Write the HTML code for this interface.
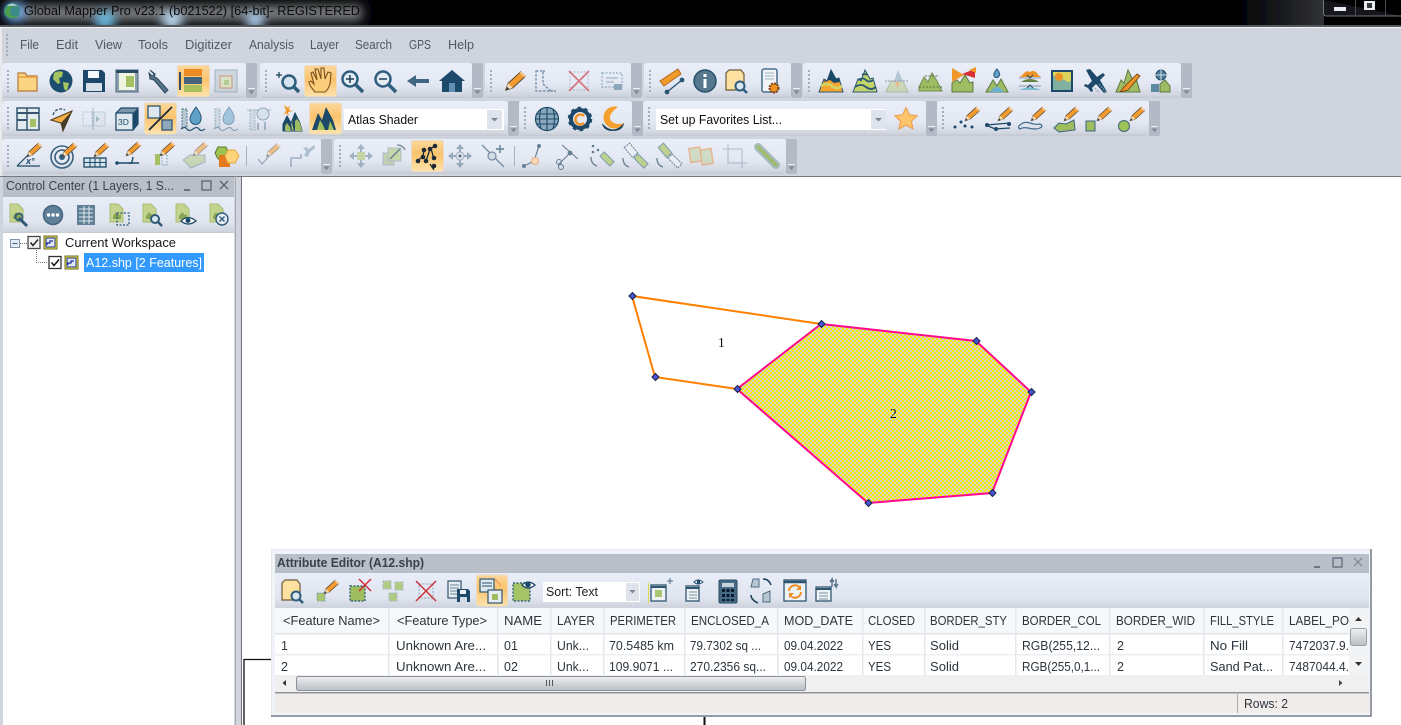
<!DOCTYPE html>
<html><head><meta charset="utf-8"><title>Global Mapper</title>
<style>html,body{margin:0;padding:0;background:#fff;overflow:hidden}svg{display:block}text{font-family:"Liberation Sans",sans-serif;font-size:12.500px}</style></head>
<body>
<svg width="1401" height="725" viewBox="0 0 1401 725" xmlns="http://www.w3.org/2000/svg">
<defs>
<linearGradient id="bd" x1="0" y1="0" x2="0" y2="1"><stop offset="0" stop-color="#e9eef8"/><stop offset=".6" stop-color="#e4e8f3"/><stop offset=".9" stop-color="#d3d7e1"/><stop offset="1" stop-color="#c3c8d1"/></linearGradient>
<linearGradient id="ac" x1="0" y1="0" x2="0" y2="1"><stop offset="0" stop-color="#fbd79c"/><stop offset=".45" stop-color="#fbc36c"/><stop offset="1" stop-color="#fde3ad"/></linearGradient>
<linearGradient id="tb" x1="0" y1="0" x2="0" y2="1"><stop offset="0" stop-color="#e8edf7"/><stop offset=".7" stop-color="#e0e5f0"/><stop offset="1" stop-color="#cdd2dc"/></linearGradient>
<linearGradient id="sc" x1="0" y1="0" x2="0" y2="1"><stop offset="0" stop-color="#eef0f2"/><stop offset="1" stop-color="#b9bec4"/></linearGradient>
<linearGradient id="gl" x1="0" y1="0" x2="1" y2="0"><stop offset="0" stop-color="#020305"/><stop offset="1" stop-color="#303236"/></linearGradient>
<pattern id="sand" width="4" height="4" patternUnits="userSpaceOnUse"><rect width="4" height="4" fill="#f5ea10"/><rect x="0" y="0" width="2" height="2" fill="#d4d4c0"/><rect x="2" y="2" width="2" height="2" fill="#d4d4c0"/></pattern>
<filter id="bl" x="-30%" y="-100%" width="160%" height="300%"><feGaussianBlur stdDeviation="5"/></filter>
<filter id="sf" filterUnits="userSpaceOnUse" x="0" y="0" width="1401" height="725"><feGaussianBlur stdDeviation="0.3"/></filter>
<g id="grip" fill="#a3adbc"><rect x="0" y="0" width="2" height="2"/><rect x="0" y="4" width="2" height="2"/><rect x="0" y="8" width="2" height="2"/><rect x="0" y="12" width="2" height="2"/><rect x="0" y="16" width="2" height="2"/><rect x="0" y="20" width="2" height="2"/></g>
<g id="end"><rect x="0" y="0" width="11" height="35" rx="2" fill="#b4bac5"/><rect x="2" y="25" width="7" height="1" fill="#eef1f4"/><path d="M2.500 27.500h6l-3 3.500z" fill="#7c8692"/></g>
<g id="pen"><path d="M-8 8l2-6L5-8l4 4L-2 6z" fill="#f29a2e" stroke="#5b4a34" stroke-width=".9"/><path d="M-8 8l2-6 4 4z" fill="#f4dcb2"/><path d="M-8 8l1-3 2 2z" fill="#333"/><path d="M4-7l4 4 1.500-1.500-4-4z" fill="#f3c693"/></g>
<g id="mnt"><path d="M-12 10V6l5-10 4 5 4-9 5 8 2 4 3 6z" fill="#a0bc62" stroke="#6f8b55"/></g>
<g id="mdoc"><path d="M-9-11h8l5 5V7H-9z" fill="#c4d48f" stroke="#a9bc75"/><path d="M-6 1l3-4 3 3 2-1v5H-6z" fill="#8aa654"/></g>
<g id="mv" fill="#8ba0b2" stroke="none"><path d="M0-12l4 5H-4zM0 12l4-5H-4zM-12 0l5-4V4zM12 0l-5-4V4z"/><path d="M-1-8h2V8h-2zM-8-1h16v2H-8z"/></g>
</defs>
<g filter="url(#sf)">
<rect x="0" y="0" width="1401" height="725" fill="#fff"/>
<!-- chrome -->
<rect x="0" y="0" width="1401" height="27" fill="#020305"/>
<rect x="1240" y="0" width="84" height="25" fill="url(#gl)"/>
<g filter="url(#bl)"><rect x="18" y="5" width="344" height="16" fill="#77797c"/><circle cx="15" cy="12" r="11" fill="#6fa4dc"/><circle cx="105" cy="21" r="10" fill="#68b6da"/><circle cx="172" cy="21" r="10" fill="#b5d2e8"/><circle cx="255" cy="21" r="9" fill="#a4c5e2"/></g>
<rect x="0" y="25" width="1401" height="3" fill="#d0d4dc"/>
<circle cx="12" cy="11" r="8" fill="#3c8a8a"/><path d="M5 12c1-7 9-10 14-5-5-2-10 0-9 6 1 3 5 4 9 2-3 4-13 4-14-3z" fill="#4da04c"/><path d="M7 6c3-3 8-3 10 0-4-1-7 0-10 0z" fill="#bfd7ef"/>
<text x="24" y="15" fill="#08090b" textLength="336" lengthAdjust="spacingAndGlyphs" style="font-size:13px">Global Mapper Pro v23.1 (b021522) [64-bit]- REGISTERED</text>
<path d="M1323.500 0v13q0 3 3 3h75" fill="#14161a" stroke="#707478"/>
<path d="M1355.500 0v16M1385.500 0v16" stroke="#4b4e53"/>
<rect x="1334" y="7" width="12" height="4" fill="#e9ecf0"/>
<rect x="1364" y="1" width="11" height="9" fill="#e9ecf0"/><rect x="1367" y="3" width="5" height="5" fill="#34373b"/>
<rect x="0" y="25" width="1401" height="2" fill="#55585c"/>
<rect x="0" y="27" width="1401" height="1" fill="#f2f4f6"/>
<rect x="0" y="28" width="1401" height="148" fill="#d0d4dc"/>
<rect x="0" y="28" width="2" height="148" fill="#e8eaee"/>

<!-- menu -->
<g transform="translate(6,34)"><use href="#grip"/></g>
<g fill="#4e5a66">
<text x="20" y="49" textLength="19" lengthAdjust="spacingAndGlyphs">File</text><text x="56" y="49" textLength="22" lengthAdjust="spacingAndGlyphs">Edit</text><text x="95" y="49" textLength="27" lengthAdjust="spacingAndGlyphs">View</text><text x="138" y="49" textLength="30" lengthAdjust="spacingAndGlyphs">Tools</text><text x="185" y="49" textLength="47" lengthAdjust="spacingAndGlyphs">Digitizer</text><text x="249" y="49" textLength="45" lengthAdjust="spacingAndGlyphs">Analysis</text><text x="310" y="49" textLength="29" lengthAdjust="spacingAndGlyphs">Layer</text><text x="355" y="49" textLength="37" lengthAdjust="spacingAndGlyphs">Search</text><text x="409" y="49" textLength="22" lengthAdjust="spacingAndGlyphs">GPS</text><text x="448" y="49" textLength="26" lengthAdjust="spacingAndGlyphs">Help</text>
</g>

<!-- bands -->
<g>
<rect x="2" y="63" width="244" height="35" rx="3" fill="url(#bd)"/><use href="#end" x="246" y="63"/>
<rect x="260" y="63" width="212" height="35" rx="3" fill="url(#bd)"/><use href="#end" x="472" y="63"/>
<rect x="485" y="63" width="146" height="35" rx="3" fill="url(#bd)"/><use href="#end" x="631" y="63"/>
<rect x="644" y="63" width="147" height="35" rx="3" fill="url(#bd)"/><use href="#end" x="791" y="63"/>
<rect x="803" y="63" width="378" height="35" rx="3" fill="url(#bd)"/><use href="#end" x="1181" y="63"/>
<rect x="2" y="101" width="506" height="35" rx="3" fill="url(#bd)"/><use href="#end" x="508" y="101"/>
<rect x="519" y="101" width="113" height="35" rx="3" fill="url(#bd)"/><use href="#end" x="632" y="101"/>
<rect x="643" y="101" width="283" height="35" rx="3" fill="url(#bd)"/><use href="#end" x="926" y="101"/>
<rect x="937" y="101" width="212" height="35" rx="3" fill="url(#bd)"/><use href="#end" x="1149" y="101"/>
<rect x="2" y="139" width="319" height="35" rx="3" fill="url(#bd)"/><use href="#end" x="321" y="139"/>
<rect x="334" y="139" width="452" height="35" rx="3" fill="url(#bd)"/><use href="#end" x="786" y="139"/>
<use href="#grip" x="7" y="70"/><use href="#grip" x="265" y="70"/><use href="#grip" x="490" y="70"/><use href="#grip" x="649" y="70"/><use href="#grip" x="808" y="70"/>
<use href="#grip" x="7" y="107"/><use href="#grip" x="524" y="107"/><use href="#grip" x="648" y="107"/><use href="#grip" x="942" y="107"/>
<use href="#grip" x="7" y="145"/><use href="#grip" x="339" y="145"/>
</g>
<!-- active highlights -->
<g fill="url(#ac)" stroke="#e9dcc2">
<rect x="177.500" y="65.500" width="32" height="31" rx="2"/><rect x="304.500" y="65.500" width="32" height="31" rx="2"/>
<rect x="144.500" y="103" width="32" height="31" rx="2"/><rect x="309.500" y="103" width="32" height="31" rx="2"/>
<rect x="411.500" y="140.500" width="32" height="31" rx="2"/>
</g>

<!-- Row 1 icons -->
<g transform="translate(28,81)"><path d="M-10-8h7l2 3h10v15h-19z" fill="#fcd582" stroke="#b5793a" stroke-width="1.200"/><path d="M-10-4h19" stroke="#e89e3c" stroke-width="1.500"/></g>
<g transform="translate(61,81)"><circle r="11.500" fill="#1c4e6e"/><path d="M-7-8q5-3 9-1l-1 5-3 1 1 5-2 1-5-5zM2 1l6 1-2 8-3-2z" fill="#a4c460"/></g>
<g transform="translate(94,81)"><path d="M-11-11h19l3 3v19h-22z" fill="#1f4a69"/><rect x="-6" y="-10" width="11" height="7" fill="#f3f6fa"/><rect x="-8" y="2" width="16" height="8" fill="#d8e0e8"/></g>
<g transform="translate(127,81)"><rect x="-11" y="-11" width="22" height="22" fill="#8aa0ae" stroke="#4d6a7e"/><rect x="-8" y="-8" width="16" height="17" fill="#eef3e2"/><rect x="-1" y="-5" width="8" height="11" fill="#a3c163"/><rect x="-11" y="-11" width="22" height="3" fill="#2c4e66"/></g>
<g transform="translate(160,81)"><path d="M-10-11l5 5-1 2 3 1 11 12-3 3L-6-1l-4-1-1-6 3 3 3-2z" fill="#55738a" stroke="#2f4a5f"/></g>
<g transform="translate(193,81)"><rect x="-9" y="-12" width="18" height="7" fill="#ee8a24"/><rect x="-9" y="-4" width="18" height="7" fill="#45647a"/><rect x="-9" y="4" width="18" height="7" fill="#a6c15c"/><path d="M-13-9v18" stroke="#2e4d66" stroke-width="2"/></g>
<g transform="translate(226,81)" opacity=".65"><rect x="-11" y="-11" width="22" height="22" fill="#bfcdd6" stroke="#7d96a6"/><rect x="-6" y="-5" width="12" height="12" fill="#d5dfb5" stroke="#c46c35"/><rect x="-2" y="-1" width="5" height="5" fill="#9dbd5f"/></g>
<g transform="translate(288,81)"><circle cx="1" cy="1" r="6.500" fill="#d4e3ed" stroke="#2d5d7e" stroke-width="2.500"/><path d="M6 6l5 5" stroke="#2d5d7e" stroke-width="3.500"/><path d="M-9-9v6M-12-6h6" stroke="#1d3f5a" stroke-width="1.200"/></g>
<g transform="translate(320,81)"><path d="M-5 11q-6-7-6-10l2-1 3 3-3-11 2-1 4 8-2-11 3 0 3 10V-13h3l1 11 3-7 3 1-1 11q-2 6-5 8z" fill="#fbcc7a" stroke="#7c4f1c" stroke-width="1.100"/></g>
<g transform="translate(352,81)"><circle cx="-2" cy="-2" r="7.500" fill="#e2ecf2" stroke="#2d5d7e" stroke-width="2.500"/><path d="M4 4l7 7" stroke="#2d5d7e" stroke-width="3.500"/><path d="M-6-2h8M-2-6v8" stroke="#1d3f5a" stroke-width="1.500"/></g>
<g transform="translate(385,81)"><circle cx="-2" cy="-2" r="7.500" fill="#e2ecf2" stroke="#2d5d7e" stroke-width="2.500"/><path d="M4 4l7 7" stroke="#2d5d7e" stroke-width="3.500"/><path d="M-6-2h8" stroke="#1d3f5a" stroke-width="1.500"/></g>
<g transform="translate(418,81)"><path d="M-11 0l9-6v4h13v4H-2v4z" fill="#3f6681"/></g>
<g transform="translate(452,81)"><path d="M-13 0L0-11 13 0h-3v11H-10V0z" fill="#1f4a69"/><rect x="-3" y="2" width="6" height="9" fill="#5f8fb4"/></g>
<use href="#pen" transform="translate(515,81) scale(1.150)"/>
<g transform="translate(546,81)"><path d="M-10-10h7v13l8 7h-15z" fill="none" stroke="#4f7194" stroke-width="1.500" stroke-dasharray="2.500 1.500" opacity=".7"/><path d="M-3-10h3M5 10h5" stroke="#4f7194" stroke-dasharray="2 1" stroke-width="1.500" opacity=".7"/></g>
<g transform="translate(579,81)" opacity=".65"><rect x="-9" y="-9" width="18" height="18" fill="none" stroke="#84a4b8" stroke-dasharray="2 1.500"/><path d="M-10-10L10 10M10-10L-10 10" stroke="#c9383c" stroke-width="1.600"/></g>
<g transform="translate(612,81)" opacity=".6"><rect x="-10" y="-8" width="20" height="14" fill="none" stroke="#6b94b3" stroke-dasharray="2 1.500" stroke-width="1.500"/><path d="M-6-3h12M-6 1h8" stroke="#88a4b8" stroke-width="1.500"/><rect x="2" y="3" width="8" height="6" fill="#547f9c"/></g>
<g transform="translate(671,81)"><path d="M-11 0L7-12l3 5-17 12z" fill="#f09a2b" stroke="#b56a1f"/><path d="M-4 11L11-1" stroke="#2c5777" stroke-width="1.400"/><circle cx="-4" cy="11" r="2.400" fill="#2c5777"/><circle cx="11" cy="-1" r="2.400" fill="#2c5777"/></g>
<g transform="translate(705,81)"><circle r="11" fill="#56788f" stroke="#27516c" stroke-width="1.500"/><rect x="-1.500" y="-2" width="3" height="9" fill="#fff"/><rect x="-1.500" y="-7" width="3" height="3" fill="#fff"/></g>
<g transform="translate(737,81)"><path d="M-8-11H4l3 4V9H-11V-8z" fill="#fde1a0" stroke="#6c5a3a" stroke-width="1.200"/><circle cx="3" cy="5" r="4.500" fill="#dce8f0" stroke="#2d5d7e" stroke-width="2"/><path d="M6 8l4 4" stroke="#2d5d7e" stroke-width="2.500"/></g>
<g transform="translate(771,81)"><rect x="-9" y="-12" width="15" height="23" rx="2" fill="#f2f5f8" stroke="#2c5777" stroke-width="1.300"/><path d="M-6-8h9M-6-5h9M-6-2h9" stroke="#9fb2c0"/><circle cx="3" cy="7" r="4.500" fill="#ee9225" stroke="#7c3f12" stroke-dasharray="2 1" stroke-width="2"/></g>
<g transform="translate(831,81)"><path d="M-12 11L-7-2l3 2 4-11 5 9 3-1 4 14z" fill="#f6a52f" stroke="#2a5674"/><path d="M-6-2l2 2 4-11 5 9 3-1 1 4-6 1-4-3-6 2z" fill="#1f4a69"/><path d="M-10 5q6-4 11 0t10 0" stroke="#cfd86a" stroke-width="2.500" fill="none"/></g>
<g transform="translate(865,81)"><path d="M-12 11L-7-2l3 2 4-11 5 9 3-1 4 14z" fill="#c3d56b" stroke="#2a5674"/><path d="M-10 6q6-4 11 0t10 0M-7-1q5-3 8 0t7 0M-3-6q2-2 5 0" stroke="#2a5674" stroke-width="1.800" fill="none"/></g>
<g transform="translate(897,81)" opacity=".6"><path d="M-11 11l5-11h12l5 11z" fill="#bdce92" stroke="#8ea373"/><path d="M-3 0l4-11 5 11z" fill="#93b0c4"/><path d="M-12 0h24" stroke="#567" stroke-dasharray="2 1"/><path d="M-2 1l2 6 3-6z" fill="#f0a050"/></g>
<g transform="translate(931,81)"><use href="#mnt"/><path d="M-12 6h24M-6-5h13" stroke="#557740" stroke-dasharray="2 1.500" fill="none"/></g>
<g transform="translate(964,81)"><path d="M-12 11V2l5-3 3 3 5-8 5 8 3-1v10z" fill="#a0bc62" stroke="#5c7a45"/><path d="M-12-13L0-6l-12 7z" fill="#f0992c"/><path d="M-2-7l5-2 8-3v9z" fill="#d62e38"/><path d="M5-11l7-3v6z" fill="#f0992c"/></g>
<g transform="translate(997,81)"><path d="M-11 11L-4-1 0 5 4-2 11 11z" fill="#a0bc62" stroke="#5c7a45"/><path d="M0-12q4 5 2 7a2.800 2.800 0 0 1-5 0q-1-3 3-7z" fill="#5fa2c8" stroke="#2a5674"/><path d="M-8 11l8-6 8 6z" fill="#6aaed0"/></g>
<g transform="translate(1030,81)"><path d="M-11-4q3-1 5-4 3-3 6-1 3-2 6 0 2 3 5 5z" fill="#ee9225"/><path d="M-11-3h22M-11 5h22" stroke="#8a9aa8"/><path d="M-9 1q4-3 9-3 5 0 9 3z" fill="#65803f"/><path d="M-11 9q11-5 22 0z" fill="#7cbcd0"/><path d="M-3-6L0-3l3-3M-3 7L0 4l3 3" stroke="#1f4a69" fill="none"/></g>
<g transform="translate(1062,81)"><rect x="-11" y="-11" width="22" height="22" fill="#1f4a69"/><rect x="-9" y="-9" width="18" height="18" fill="#7fb0a0"/><path d="M-9-9H9v9q-3 2-5 0t-6-2-3-2-4-1z" fill="#dcd35c"/><circle cx="-3" cy="-4" r="4" fill="#ee9225"/></g>
<g transform="translate(1095,81)"><path d="M-9-11l4-1 7 8 6-4 2 2-5 5 7 12-3 1-8-9-4 4 1 3-2 1-3-4-4-2 1-2 3 1 4-4z" fill="#1f4a69"/><path d="M4 3l7 8M0 7l4 5" stroke="#87a0b2" stroke-dasharray="2 1"/></g>
<g transform="translate(1128,81)"><path d="M-12 11L-7-1l3 3 4-13 5 10 3-2 4 14z" fill="#a0bc62" stroke="#5c7a45"/><path d="M-8 11l4-5L9-7l3 2-12 14z" fill="#ee9225" stroke="#6a3a14" stroke-width=".8"/></g>
<g transform="translate(1161,81)"><circle cy="-6" r="5" fill="#4c7a98" stroke="#1f4a69"/><path d="M-7-6H7M0-13V1" stroke="#cfdbe3"/><path d="M-10 11V3h8V11z" fill="#5d89a5"/><path d="M-1 11V3l5-4 5 6V11z" fill="#a0bc62" stroke="#5c7a45"/></g>

<!-- Row 2 icons -->
<g transform="translate(28,119)"><rect x="-11" y="-11" width="22" height="22" fill="#e2ebee" stroke="#35566e" stroke-width="1.500"/><path d="M-1-11V11" stroke="#35566e" stroke-width="1.500"/><path d="M-11-6H11M-11 1h10" stroke="#35566e" stroke-width="2"/><rect x="2" y="0" width="6" height="8" fill="#a3c163"/></g>
<g transform="translate(61,119)"><path d="M-10 1L11-8 2 12l-2-8z" fill="#f6b045" stroke="#4d3a20"/><path d="M0 4l11-12-9 20z" fill="#473d2c"/><path d="M-8-4q2-6 8-6 2 0 4 1" fill="none" stroke="#2e4d66" stroke-width="1.300" stroke-dasharray="3 1.500"/></g>
<g transform="translate(94,119)" opacity=".55"><rect x="-11" y="-7" width="9" height="14" fill="none" stroke="#88a4b8" stroke-dasharray="2 1.500"/><rect x="0" y="-7" width="11" height="14" fill="#d9e2e8" stroke="#a0b5c2"/><path d="M-1-11V11" stroke="#6f8fa4"/><path d="M2-3l4 3-4 3z" fill="#6f8fa4"/></g>
<g transform="translate(127,119)"><path d="M-11-6l5-5H11V5L6 11H-11z" fill="#7d98aa" stroke="#1f4a69" stroke-width="1.200"/><rect x="-11" y="-6" width="17" height="17" fill="#dfe8ee" stroke="#1f4a69" stroke-width="1.200"/><path d="M6-6V11l5-6V-11z" fill="#1f4a69"/><text x="-9" y="6" fill="#1f4a69" style="font-size:8.500px">3D</text></g>
<g transform="translate(160,119)"><rect x="-12" y="-13" width="12" height="12" fill="#dfe7ee" stroke="#2f5570" stroke-width="1.300"/><rect x="2" y="1" width="10" height="10" fill="#8fa8ba" stroke="#2f5570" stroke-width="1.300"/><path d="M-11 11L12-12" stroke="#1e2b35" stroke-width="1.800"/></g>
<g transform="translate(193,119)"><path d="M-11-10H-6V8H-11z" fill="#b8c8d0" stroke="#567a90" stroke-dasharray="2 1"/><path d="M3-12q6 8 5 12a5.500 5.500 0 0 1-11 0q0-4 6-12z" fill="#5fa2c8" stroke="#2a5674"/><path d="M-12 10q4-3 6 0t6 0 6 0 6 0" stroke="#2a5674" fill="none" stroke-width="1.300"/></g>
<g transform="translate(226,119)" opacity=".5"><path d="M-11-10H-6V8H-11z" fill="#b8c8d0" stroke="#567a90" stroke-dasharray="2 1"/><path d="M3-12q6 8 5 12a5.500 5.500 0 0 1-11 0q0-4 6-12z" fill="#5fa2c8" stroke="#2a5674"/><path d="M-12 10q4-3 6 0t6 0 6 0 6 0" stroke="#2a5674" fill="none"/></g>
<g transform="translate(259,119)" opacity=".45"><path d="M-9-9H-4V11H-9z" fill="#b8c8d0" stroke="#567a90" stroke-dasharray="2 1"/><path d="M-12-9h24" stroke="#567a90"/><circle cx="4" cy="-5" r="6" fill="#c3d7e2" stroke="#2a5674"/><path d="M-1 4V11M6 3V11" stroke="#567a90" stroke-width="2"/></g>
<g transform="translate(292,119)"><path d="M-9 12V5l4-8 4 7 4-10 5 10 2 8z" fill="#a0bc62" stroke="#1f4a69"/><path d="M-5-3l4 7 1 8H-9V5zM3-6l5 10 2 8H2l-2-8z" fill="#1f4a69"/><path d="M3 12V2l2-2 3 4 2 8zM-7 12v-5l2-3 3 4 1 4z" fill="#a0bc62"/><path d="M-6-8L-8-14l4 3 2-3-1 5 4 1-5 1 1 4-3-3-3 2z" fill="#f09a2c"/></g>
<g transform="translate(325,119)"><path d="M-13 11L-7-6l4 7 4-13 7 13 3 10z" fill="#1f4a69"/><path d="M-8 11l3-10 3 5 2 5zM3 11l2-9 4 9z" fill="#a6c15c"/></g>
<rect x="344" y="109" width="160" height="21" fill="#fff"/><rect x="487" y="110" width="15" height="19" fill="#dfe4ec"/><path d="M491 118h7l-3.500 3.500z" fill="#7a8592"/>
<text x="348" y="124" fill="#111" textLength="70" lengthAdjust="spacingAndGlyphs">Atlas Shader</text>
<g transform="translate(547,119)"><circle r="11.500" fill="#8aa8bb" stroke="#1f4a69" stroke-width="1.200"/><path d="M-11-5H11M-12 0H12M-11 5H11M0-12V12M-6-10q-3 10 0 20M6-10q3 10 0 20" stroke="#1f4a69" fill="none" stroke-width="1.100"/></g>
<g transform="translate(580,119)"><circle r="9" fill="none" stroke="#1f4a69" stroke-width="4"/><circle r="11" fill="none" stroke="#1f4a69" stroke-width="2.500" stroke-dasharray="3.500 3.500"/><path d="M4-3a5 5 0 1 0 0 7" stroke="#ee9225" stroke-width="2.500" fill="none"/></g>
<g transform="translate(613,119)"><path d="M5-12A11 11 0 1 0 11 4Q4 7-2 2-6-4 5-12z" fill="#f5a02e"/><path d="M-11 4q11 13 22 0q-1 8-11 8T-11 4z" fill="#1f3f58"/></g>
<rect x="656" y="109" width="230" height="21" fill="#fff"/><rect x="871" y="110" width="15" height="19" fill="#dfe4ec"/><path d="M875 118h7l-3.500 3.500z" fill="#7a8592"/>
<text x="660" y="124" fill="#111" textLength="122" lengthAdjust="spacingAndGlyphs">Set up Favorites List...</text>
<path d="M906 107.500l3.400 7.200 7.800 1-5.700 5.400 1.500 7.800-7-3.800-7 3.800 1.500-7.800-5.700-5.400 7.800-1z" fill="#fdc56b" stroke="#f09a48"/>
<use href="#pen" transform="translate(972,114) scale(.85)"/><g fill="#1f4a69"><circle cx="955" cy="127" r="1.500"/><circle cx="961" cy="122" r="1.500"/><circle cx="965" cy="126" r="1.500"/><circle cx="972" cy="127" r="1.500"/></g>
<use href="#pen" transform="translate(1005,114) scale(.85)"/><path d="M986 125l24-2M986 125l9 4 15-1" stroke="#1f4a69" stroke-width="1.300" fill="none"/><circle cx="987" cy="125" r="2" fill="#1f4a69"/><circle cx="1009" cy="124" r="2" fill="#1f4a69"/><circle cx="996" cy="129" r="2" fill="#1f4a69"/>
<use href="#pen" transform="translate(1038,114) scale(.85)"/><path d="M1020 125q4-4 10-2t10 1q4 2 0 4t-12 0q-5-1-8 1-3-2 0-4z" fill="none" stroke="#3b6a8a" stroke-width="1.200"/>
<use href="#pen" transform="translate(1071,114) scale(.85)"/><path d="M1054 128l5-5 7 1 8-4 1 10-16 2z" fill="#9dbd5f" stroke="#3d6384"/>
<use href="#pen" transform="translate(1104,114) scale(.85)"/><rect x="1086" y="121" width="9" height="10" fill="#9dbd5f" stroke="#3d6384"/>
<use href="#pen" transform="translate(1137,114) scale(.85)"/><circle cx="1124" cy="126" r="5.500" fill="#9dc254" stroke="#3d6384"/>

<!-- Row 3 icons -->
<g transform="translate(29,156)"><path d="M-12 10H11M-12 10L4-6" stroke="#1f4a69" stroke-width="1.200" fill="none"/><text x="-3" y="8" fill="#1f4a69" style="font-size:9px;font-weight:bold;font-style:italic">x°</text><use href="#pen" transform="translate(5,-6) scale(.85)"/></g>
<g transform="translate(62,156)"><circle cy="1" r="11" fill="none" stroke="#34607e" stroke-width="1.600"/><circle cy="1" r="7" fill="none" stroke="#34607e" stroke-width="1.600"/><circle cy="1" r="3" fill="#34607e"/><use href="#pen" transform="translate(7,-6) scale(.85)"/></g>
<g transform="translate(95,156)"><rect x="-11" y="2" width="22" height="9" fill="#d8e4ec" stroke="#1f4a69" stroke-width="1.300"/><path d="M-11 6.500H11M-5 2V11M0 2V11M5 2V11" stroke="#1f4a69"/><use href="#pen" transform="translate(6,-6) scale(.85)"/></g>
<g transform="translate(128,156)"><path d="M-12 7H11M1 7q3 2 4-6" stroke="#1f4a69" stroke-width="1.400" fill="none"/><circle cx="-11" cy="7" r="1.800" fill="#1f4a69"/><use href="#pen" transform="translate(5,-7) scale(.85)"/></g>
<g transform="translate(161,156)"><rect x="-6" y="-2" width="5" height="11" fill="#a3c163"/><rect x="1" y="-2" width="5" height="11" fill="none" stroke="#6d9dae" stroke-dasharray="1.500 1.500"/><use href="#pen" transform="translate(6,-7) scale(.85)"/></g>
<g transform="translate(194,156)" opacity=".55"><path d="M-11 4l7-5 15 0 0 7-14 6z" fill="#b4c98a" stroke="#6c8ea1"/><use href="#pen" transform="translate(6,-7) scale(.85)"/></g>
<g transform="translate(227,156)"><path d="M-12-3l3-6h8l3 6-3 6h-8z" fill="#9dc24f" stroke="#5a7a35"/><rect x="-8" y="-1" width="11" height="12" fill="#e37a20"/><path d="M-3-3l3-6h7l4 6-4 7H0z" fill="#fcd47a" stroke="#e8a63a" transform="translate(1,3)"/></g>
<rect x="246" y="146" width="1" height="20" fill="#a8b1bd"/>
<g transform="translate(267,156)" opacity=".55"><path d="M-9 3l4 5L3-1" stroke="#52748c" stroke-width="1.200" fill="none"/><use href="#pen" transform="translate(6,-6) scale(.8)"/></g>
<g transform="translate(302,156)" opacity=".5"><path d="M-11 11V2h10v-4" stroke="#52748c" fill="none" stroke-width="1.500"/><path d="M2 0l2-5-3-3 3-1 3 2 5-4 1 3-5 4-2 5z" fill="#7897ab"/></g>
<g transform="translate(361,156)" opacity=".75"><use href="#mv"/><rect x="-4" y="-4" width="8" height="8" fill="#b9cf8a"/></g>
<g transform="translate(394,156)" opacity=".7"><rect x="-11" y="-3" width="11" height="12" fill="#b5c89a" stroke="#9ab"/><rect x="-6" y="-8" width="13" height="13" fill="#b9cf8a" stroke="#9ab"/><path d="M-4 3L6-7" stroke="#356" stroke-width="1.400"/><path d="M3-11q6 0 8 5" fill="none" stroke="#567" stroke-width="1.400"/></g>
<g transform="translate(427,156)"><path d="M-9 4l5-3 1-8M-1 5l4-12 5-3M3 8l4 6M4-8L7 4" stroke="#1e2b35" stroke-width="1.300" fill="none"/><g fill="#1e2b35"><circle cx="-9" cy="5" r="2.300"/><circle cx="-4" cy="1" r="2.300"/><circle cx="-3" cy="-6" r="2.300"/><circle cx="-1" cy="5" r="2.300"/><circle cx="3" cy="-7" r="2.300"/><circle cx="8" cy="-10" r="2.300"/><circle cx="7" cy="2" r="2.300"/><circle cx="7" cy="10" r="2.300"/></g></g>
<g transform="translate(460,156)" opacity=".85"><use href="#mv"/><circle r="4" fill="#dfe7ee" stroke="#8ba0b2"/><circle r="1.500" fill="#456"/></g>
<g transform="translate(493,156)" opacity=".8"><path d="M-11-11L11 11" stroke="#57768c" stroke-width="1.300"/><circle cx="-1" cy="0" r="4" fill="#cfdbe3" stroke="#57768c" stroke-width="1.200"/><path d="M3-7h8M7-11v8" stroke="#57768c" stroke-width="1.700"/></g>
<rect x="514" y="146" width="1" height="20" fill="#a8b1bd"/>
<g transform="translate(534,156)" opacity=".85"><path d="M-10 10L0 5 5-10" stroke="#4f7188" stroke-width="1.200" fill="none"/><circle cx="-10" cy="10" r="2" fill="#4f7188"/><circle cx="5" cy="-10" r="2" fill="#4f7188"/><circle cx="1" cy="5" r="3.500" fill="#fbd9b0" stroke="#eba366"/></g>
<g transform="translate(567,156)" opacity=".85"><path d="M-5-11L11 3M-9 9L3-3" stroke="#4f6d82" stroke-width="1.100"/><circle cx="-8" cy="6" r="2.500" fill="none" stroke="#4f6d82"/><circle cx="-6" cy="11" r="2.500" fill="none" stroke="#4f6d82"/><circle cx="3" cy="-3" r="2.400" fill="#4f6d82"/></g>
<g transform="translate(601,156)" opacity=".85"><rect x="3" y="-4" width="6" height="14" fill="#b6cc7f" stroke="#6f90a4" transform="rotate(-45 6 3)"/><g fill="#4f6d82"><circle cx="-8" cy="-10" r="1.300"/><circle cx="-3" cy="-6" r="1.300"/><circle cx="-8" cy="-4" r="1.300"/></g><path d="M-10 1q0 7 6 9" fill="none" stroke="#4f6d82" stroke-width="1.300"/></g>
<g transform="translate(634,156)" opacity=".85"><rect x="-6" y="-12" width="7" height="13" fill="#e8eef2" stroke="#4f6d82" stroke-dasharray="2 1" transform="rotate(-40 -3 -5)"/><rect x="4" y="-2" width="6" height="14" fill="#b6cc7f" stroke="#6f90a4" transform="rotate(-45 7 5)"/><path d="M-11 2q0 7 6 9" fill="none" stroke="#4f6d82" stroke-width="1.300"/></g>
<g transform="translate(668,156)" opacity=".85"><rect x="-6" y="-12" width="7" height="13" fill="#b6cc7f" stroke="#6f90a4" transform="rotate(-40 -3 -5)"/><rect x="4" y="-2" width="6" height="14" fill="#e8eef2" stroke="#4f6d82" stroke-dasharray="2 1" transform="rotate(-45 7 5)"/><path d="M-11 2q0 7 6 9" fill="none" stroke="#4f6d82" stroke-width="1.300"/></g>
<g transform="translate(701,156)" opacity=".6"><rect x="-11" y="-9" width="11" height="14" fill="#c2d3a8" stroke="#e5995a" stroke-width="1.600" transform="rotate(-8)"/><rect x="0" y="-6" width="11" height="15" fill="#c2d3a8" stroke="#e5995a" stroke-width="1.600" transform="rotate(-8)"/></g>
<g transform="translate(735,156)" opacity=".35"><path d="M-7-12V7H12M-12-7H7V12" fill="none" stroke="#5f7f96" stroke-width="1.300"/></g>
<g transform="translate(767,156)" opacity=".85"><path d="M-9-9L9 9" stroke="#9bb3b5" stroke-width="8" stroke-linecap="round"/><path d="M-9-9L9 9" stroke="#95b454" stroke-width="3.500" stroke-linecap="round"/></g>

<!-- Control Center -->
<rect x="0" y="176" width="1401" height="1" fill="#75787e"/>
<rect x="0" y="177" width="242" height="548" fill="#d0d4dc"/>
<rect x="3" y="177" width="231" height="20" fill="#b8bfc9"/>
<text x="6" y="190" fill="#3a434d" textLength="168" lengthAdjust="spacingAndGlyphs">Control Center (1 Layers, 1 S...</text>
<path d="M184 190h6" stroke="#4f5a64" stroke-width="1.500"/><rect x="202" y="181" width="9" height="9" fill="none" stroke="#5a6570" stroke-width="1.300"/><path d="M220 181l8 8M228 181l-8 8" stroke="#5a6570" stroke-width="1.300"/>
<rect x="3" y="197" width="231" height="35" fill="url(#tb)"/>
<g transform="translate(19,215)"><use href="#mdoc"/><path d="M0 3l8 8" stroke="#2f5a78" stroke-width="3"/><circle cx="0" cy="2" r="3.500" fill="none" stroke="#2f5a78" stroke-width="1.800"/></g>
<g transform="translate(53,215)"><circle r="9.500" fill="#5f8098" stroke="#45657c" stroke-width="1.500"/><circle cx="-4.500" r="1.700" fill="#fff"/><circle r="1.700" fill="#fff"/><circle cx="4.500" r="1.700" fill="#fff"/></g>
<g transform="translate(86,215)"><rect x="-9" y="-10" width="18" height="20" fill="#5f7f95"/><path d="M-7-6H7M-7-2H7M-7 2H7M-7 6H7M-2-9V9M3-9V9" stroke="#dfe7ec"/></g>
<g transform="translate(119,215)"><use href="#mdoc"/><rect x="-2" y="-2" width="12" height="12" fill="none" stroke="#2f5a78" stroke-dasharray="2 1.500" stroke-width="1.300"/></g>
<g transform="translate(152,215)"><use href="#mdoc"/><circle cx="3" cy="4" r="4" fill="#dce8f0" stroke="#2f5a78" stroke-width="2"/><path d="M6 7l4 4" stroke="#2f5a78" stroke-width="2.500"/></g>
<g transform="translate(185,215)"><use href="#mdoc"/><path d="M-4 6q7-7 15 0-8 6-15 0z" fill="#fff" stroke="#1f4a69" stroke-width="1.300"/><circle cx="3" cy="5.500" r="2.500" fill="#1f4a69"/></g>
<g transform="translate(219,215)"><use href="#mdoc"/><circle cx="3" cy="4" r="6" fill="#e4ecf2" stroke="#2f5a78" stroke-width="1.400"/><path d="M0.500 1.500l5 5M5.500 1.500l-5 5" stroke="#2f5a78" stroke-width="1.300"/></g>
<rect x="3" y="232" width="231" height="493" fill="#fff"/>
<rect x="3" y="232" width="231" height="1" fill="#c8ccd2"/>
<rect x="235" y="176" width="1" height="549" fill="#a5a8ae"/><rect x="241" y="176" width="1" height="549" fill="#6f7278"/>
<!-- Tree -->
<rect x="10.500" y="239.500" width="9" height="8" fill="#e6eaf2" stroke="#7f93ad"/><path d="M12.500 243.500h5" stroke="#3e5f8a"/>
<path d="M20 243.500h7M36.500 250v12.500H48" stroke="#777" stroke-dasharray="1 1" fill="none"/>
<rect x="28" y="236.500" width="12" height="12" fill="#f3f3f3" stroke="#4a4a4a" stroke-width="1.300"/><path d="M30.500 242.500l2.500 3 5-6" fill="none" stroke="#222" stroke-width="1.500"/>
<rect x="44" y="236" width="13" height="13" fill="#ece43a" stroke="#6b6a2c"/><rect x="46" y="238" width="9" height="9" fill="#dfe8f4" stroke="#1a2f9a"/><path d="M47 245v-2h3v-2h3" stroke="#1a2f9a" fill="none" stroke-width="1.200"/>
<text x="65" y="247" fill="#16181c" textLength="111" lengthAdjust="spacingAndGlyphs">Current Workspace</text>
<rect x="49" y="256.500" width="12" height="12" fill="#fff" stroke="#333" stroke-width="1.300"/><path d="M51.500 262.500l2.500 3 5-6" fill="none" stroke="#111" stroke-width="1.500"/>
<rect x="65" y="256" width="13" height="13" fill="#ece43a" stroke="#6b6a2c"/><rect x="67" y="258" width="9" height="9" fill="#dfe8f4" stroke="#1a2f9a"/><path d="M68 265v-2h3v-2h3" stroke="#1a2f9a" fill="none" stroke-width="1.200"/>
<rect x="84" y="253" width="120" height="19" fill="#3399ff"/>
<text x="86" y="267" fill="#fff" textLength="116" lengthAdjust="spacingAndGlyphs">A12.shp [2 Features]</text>

<path d="M244 725V659.500H272" fill="none" stroke="#111" stroke-width="1.300"/>
<path d="M704.500 716V725" stroke="#111" stroke-width="2"/>

<!-- Attribute Editor -->
<rect x="271" y="549" width="1101" height="168" fill="#f0f3f7"/>
<rect x="271.500" y="549.500" width="1100" height="166" fill="none" stroke="#e4e8ee"/>
<path d="M271 716H1371V549" stroke="#7a8088" stroke-width="1.500" fill="none"/>
<rect x="275" y="554" width="1094" height="19" fill="#b8bfc9"/>
<text x="277" y="567" fill="#39424c" textLength="147" lengthAdjust="spacingAndGlyphs" style="font-weight:bold">Attribute Editor (A12.shp)</text>
<path d="M1314 567h6" stroke="#55606a" stroke-width="1.500"/><rect x="1333" y="558" width="9" height="9" fill="none" stroke="#5a6570" stroke-width="1.200"/><path d="M1354 558l8 8M1362 558l-8 8" stroke="#7a858f" stroke-width="1.200"/>
<rect x="275" y="573" width="1094" height="35" fill="url(#tb)"/>
<rect x="476.500" y="575" width="31" height="31" rx="2" fill="url(#ac)" stroke="#e9dcc2"/>
<g transform="translate(293,591)"><path d="M-8-11H4l3 4V9H-11V-8z" fill="#fde1a0" stroke="#6c5a3a" stroke-width="1.200"/><circle cx="3" cy="5" r="4.500" fill="#dce8f0" stroke="#2d5d7e" stroke-width="2"/><path d="M6 8l4 4" stroke="#2d5d7e" stroke-width="2.500"/></g>
<g transform="translate(326,591)"><rect x="-9" y="2" width="8" height="8" fill="#a9c66f" stroke="#7ba0b4" stroke-dasharray="1.500 1"/><use href="#pen" transform="translate(5,-4) scale(.85)"/></g>
<g transform="translate(360,591)"><rect x="-10" y="-5" width="15" height="15" fill="#9dbd5f" stroke="#3d6384" stroke-dasharray="2 1.500" stroke-width="1.400"/><path d="M-1-12L11 0M11-12L-1 0" stroke="#d32f35" stroke-width="1.500"/></g>
<g transform="translate(393,591)" opacity=".85"><rect x="-10" y="-10" width="8" height="8" fill="#a9c66f" stroke="#9fb3c0" stroke-dasharray="1.500 1" stroke-width="1.200"/><rect x="2" y="-9" width="8" height="8" fill="#a9c66f" stroke="#9fb3c0" stroke-dasharray="1.500 1" stroke-width="1.200"/><rect x="-4" y="2" width="8" height="8" fill="#a9c66f" stroke="#9fb3c0" stroke-dasharray="1.500 1" stroke-width="1.200"/></g>
<g transform="translate(426,591)"><rect x="-7" y="-7" width="14" height="14" fill="none" stroke="#8ba4b5" stroke-dasharray="2 1.500"/><path d="M-10-10L10 10M10-10L-10 10" stroke="#cf3238" stroke-width="1.500"/></g>
<g transform="translate(459,591)"><rect x="-11" y="-10" width="13" height="17" fill="#e6edf2" stroke="#2f5570" stroke-width="1.200"/><path d="M-9-6H0M-9-3H0M-9 0H0M-9 3H0" stroke="#6a8397"/><path d="M-2-2H9l2 2V11H-2z" fill="#1f4a69"/><rect x="1" y="-1" width="6" height="4" fill="#eef2f5"/><rect x="1" y="6" width="7" height="5" fill="#d3dde4"/></g>
<g transform="translate(491,591)"><rect x="-11" y="-12" width="14" height="13" fill="#dfe8ee" stroke="#2f5570" stroke-width="1.200"/><path d="M-9-8h10M-9-5h10" stroke="#2f5570"/><rect x="-3" y="-1" width="14" height="13" fill="#e6edf2" stroke="#2f5570" stroke-width="1.200"/><rect x="1" y="3" width="6" height="6" fill="#9dbd5f"/><path d="M4-12l6 7" stroke="#f0a25a" stroke-width="1.500"/></g>
<g transform="translate(524,591)"><rect x="-11" y="-8" width="17" height="18" fill="#a4c466" stroke="#3d6384" stroke-dasharray="2 1.500" stroke-width="1.400"/><path d="M-2-6q6-6 13 0-7 6-13 0z" fill="#fff" stroke="#1f4a69" stroke-width="1.300"/><circle cx="4" cy="-6.500" r="2.800" fill="#1f4a69"/></g>
<rect x="543" y="582" width="97" height="20" fill="#fff"/><rect x="626" y="583" width="13" height="18" fill="#dfe4ec"/><path d="M629.500 590h6l-3 3.500z" fill="#7a8592"/>
<text x="546" y="596" fill="#222" textLength="52" lengthAdjust="spacingAndGlyphs">Sort: Text</text>
<rect x="648" y="583" width="1" height="20" fill="#dcd84a"/>
<g transform="translate(660,591)"><rect x="-9" y="-6" width="15" height="16" fill="#eef2f5" stroke="#2f5570" stroke-width="1.300"/><path d="M-9-4H6" stroke="#2f5570" stroke-width="2"/><rect x="-5" y="-1" width="7" height="7" fill="#a9c66f"/><path d="M7-10h6M10-13v6" stroke="#4f6d82"/></g>
<g transform="translate(694,591)"><rect x="-8" y="-5" width="13" height="15" fill="#eef2f5" stroke="#2f5570" stroke-width="1.300"/><path d="M-8-3H5" stroke="#2f5570" stroke-width="2"/><path d="M-5 1H3M-5 4H3M-5 7H3" stroke="#7a92a3"/><path d="M0-9q4-4 9 0-5 4-9 0z" fill="#fff" stroke="#1f4a69"/><circle cx="4.500" cy="-9" r="1.700" fill="#1f4a69"/></g>
<g transform="translate(728,591)"><rect x="-9" y="-11" width="18" height="23" rx="1.500" fill="#456b85" stroke="#2c4e66"/><rect x="-6" y="-8" width="12" height="4" fill="#c7d4dc"/><g fill="#101e2a"><rect x="-6" y="-2" width="3" height="3"/><rect x="-1.500" y="-2" width="3" height="3"/><rect x="3" y="-2" width="3" height="3"/><rect x="-6" y="3" width="3" height="3"/><rect x="-1.500" y="3" width="3" height="3"/><rect x="3" y="3" width="3" height="3"/><rect x="-6" y="8" width="3" height="2"/><rect x="-1.500" y="8" width="3" height="2"/><rect x="3" y="8" width="3" height="2"/></g></g>
<g transform="translate(761,591)"><path d="M-10-4l2-8h6v8z" fill="#b7c7d2" stroke="#4f6d82"/><path d="M2 11l0-8 7-3v11z" fill="#b7c7d2" stroke="#4f6d82"/><path d="M2-12q6 0 8 6M-10 4q0 5 7 8" fill="none" stroke="#1f3f58" stroke-width="1.500"/></g>
<g transform="translate(795,591)"><rect x="-11" y="-11" width="22" height="21" fill="#eef2f5" stroke="#2f5570" stroke-width="1.300"/><path d="M-11-9H11" stroke="#2f5570" stroke-width="2.500"/><path d="M-6 0a6 6 0 0 1 11-3M6 1a6 6 0 0 1-11 3" fill="none" stroke="#ee8e26" stroke-width="2"/><path d="M6-6v5h-5zM-6 7v-5h5z" fill="#ee8e26"/></g>
<g transform="translate(826,591)"><rect x="-10" y="-4" width="15" height="14" fill="#eef2f5" stroke="#2f5570" stroke-width="1.300"/><path d="M-10-2H5" stroke="#2f5570" stroke-width="2"/><path d="M-7 2H2M-7 5H2M-7 8H2" stroke="#7a92a3"/><path d="M6-4v-8l-2 3M6-12l2 3M10-12v8l-2-3M10-4l2-3" stroke="#4f6d82" fill="none" stroke-width="1.300"/></g>

<!-- Table -->
<rect x="275" y="608" width="1094" height="67" fill="#fff"/>
<rect x="275" y="608" width="1074" height="25" fill="#f7f8fa"/>
<rect x="275" y="633" width="1074" height="1.500" fill="#dfe3e8"/>
<rect x="275" y="654" width="1074" height="1.500" fill="#eceff2"/>
<g fill="#e4e7eb"><rect x="388" y="608" width="1.500" height="67"/><rect x="497" y="608" width="1.500" height="67"/><rect x="550" y="608" width="1.500" height="67"/><rect x="603" y="608" width="1.500" height="67"/><rect x="684" y="608" width="1.500" height="67"/><rect x="777" y="608" width="1.500" height="67"/><rect x="862" y="608" width="1.500" height="67"/><rect x="924" y="608" width="1.500" height="67"/><rect x="1015" y="608" width="1.500" height="67"/><rect x="1109" y="608" width="1.500" height="67"/><rect x="1203" y="608" width="1.500" height="67"/><rect x="1282" y="608" width="1.500" height="67"/></g>
<g fill="#2c343c">
<text lengthAdjust="spacingAndGlyphs" x="283" y="625" textLength="97">&lt;Feature Name&gt;</text><text lengthAdjust="spacingAndGlyphs" x="397" y="625" textLength="90">&lt;Feature Type&gt;</text><text lengthAdjust="spacingAndGlyphs" x="504" y="625" textLength="38">NAME</text><text lengthAdjust="spacingAndGlyphs" x="557" y="625" textLength="38">LAYER</text><text lengthAdjust="spacingAndGlyphs" x="610" y="625" textLength="66">PERIMETER</text><text lengthAdjust="spacingAndGlyphs" x="691" y="625" textLength="78">ENCLOSED_A</text><text lengthAdjust="spacingAndGlyphs" x="784" y="625" textLength="69">MOD_DATE</text><text lengthAdjust="spacingAndGlyphs" x="868" y="625" textLength="47">CLOSED</text><text lengthAdjust="spacingAndGlyphs" x="930" y="625" textLength="77">BORDER_STY</text><text lengthAdjust="spacingAndGlyphs" x="1022" y="625" textLength="79">BORDER_COL</text><text lengthAdjust="spacingAndGlyphs" x="1116" y="625" textLength="79">BORDER_WID</text><text lengthAdjust="spacingAndGlyphs" x="1210" y="625" textLength="64">FILL_STYLE</text><text lengthAdjust="spacingAndGlyphs" x="1289" y="625" textLength="60">LABEL_PO</text>
<text x="281" y="650">1</text><text lengthAdjust="spacingAndGlyphs" x="396" y="650" textLength="90">Unknown Are...</text><text x="504" y="650">01</text><text x="557" y="650" textLength="32" lengthAdjust="spacingAndGlyphs">Unk...</text><text lengthAdjust="spacingAndGlyphs" x="609" y="650" textLength="65">70.5485 km</text><text lengthAdjust="spacingAndGlyphs" x="690" y="650" textLength="71">79.7302 sq ...</text><text lengthAdjust="spacingAndGlyphs" x="784" y="650" textLength="59">09.04.2022</text><text x="868" y="650" textLength="23" lengthAdjust="spacingAndGlyphs">YES</text><text x="930" y="650" textLength="29" lengthAdjust="spacingAndGlyphs">Solid</text><text lengthAdjust="spacingAndGlyphs" x="1022" y="650" textLength="78">RGB(255,12...</text><text x="1117" y="650">2</text><text x="1210" y="650" textLength="38" lengthAdjust="spacingAndGlyphs">No Fill</text><text lengthAdjust="spacingAndGlyphs" x="1289" y="650" textLength="60">7472037.9.</text>
<text x="281" y="671">2</text><text lengthAdjust="spacingAndGlyphs" x="396" y="671" textLength="90">Unknown Are...</text><text x="504" y="671">02</text><text x="557" y="671" textLength="32" lengthAdjust="spacingAndGlyphs">Unk...</text><text lengthAdjust="spacingAndGlyphs" x="609" y="671" textLength="64">109.9071 ...</text><text lengthAdjust="spacingAndGlyphs" x="690" y="671" textLength="76">270.2356 sq...</text><text lengthAdjust="spacingAndGlyphs" x="784" y="671" textLength="59">09.04.2022</text><text x="868" y="671" textLength="23" lengthAdjust="spacingAndGlyphs">YES</text><text x="930" y="671" textLength="29" lengthAdjust="spacingAndGlyphs">Solid</text><text lengthAdjust="spacingAndGlyphs" x="1022" y="671" textLength="78">RGB(255,0,1...</text><text x="1117" y="671">2</text><text lengthAdjust="spacingAndGlyphs" x="1210" y="671" textLength="63">Sand Pat...</text><text lengthAdjust="spacingAndGlyphs" x="1289" y="671" textLength="60">7487044.4.</text>
</g>
<!-- scrollbars -->
<rect x="1349" y="608" width="20" height="67" fill="#f2f3f5"/>
<path d="M1355 621l3.500-4 3.500 4z" fill="#333"/><path d="M1355 662l3.500 4 3.500-4z" fill="#333"/>
<rect x="1350.500" y="628.500" width="16" height="17" rx="2" fill="url(#sc)" stroke="#9ba0a6"/>
<rect x="275" y="675" width="1094" height="17" fill="#f0f0f0"/>
<path d="M286 680v6l-3.500-3z" fill="#333"/><path d="M1339 680v6l3.500-3z" fill="#444"/>
<rect x="296.500" y="676.500" width="509" height="14" rx="2" fill="url(#sc)" stroke="#8c9197"/>
<path d="M546.500 680v6M549.500 680v6M552.500 680v6" stroke="#555"/>
<rect x="275" y="692" width="1094" height="1.500" fill="#8f9296"/>
<rect x="275" y="694" width="1094" height="19" fill="#efecea"/>
<rect x="1237" y="694" width="1" height="19" fill="#aeb0b4"/>
<text x="1244" y="708" fill="#2d343b" textLength="44" lengthAdjust="spacingAndGlyphs">Rows: 2</text>
</g>

<!-- Map (unblurred so the sand pattern stays crisp) -->
<path d="M632 296L821 324M632 296L655 377L737 389" fill="none" stroke="#ff8000" stroke-width="2"/>
<path d="M821 324L976 341L1031 392L992 493L868 503L737 389Z" fill="url(#sand)" stroke="#ff0a8c" stroke-width="2"/>
<g fill="#4a55d8" stroke="#1a2040" stroke-width="1"><path d="M632.500 292.500l3.500 3.500-3.500 3.500-3.500-3.500z"/><path d="M821.500 320.500l3.500 3.500-3.500 3.500-3.500-3.500z"/><path d="M655.500 373.500l3.500 3.500-3.500 3.500-3.500-3.500z"/><path d="M737.500 385.500l3.500 3.500-3.500 3.500-3.500-3.500z"/><path d="M976.500 337.500l3.500 3.500-3.500 3.500-3.500-3.500z"/><path d="M1031.500 388.500l3.500 3.500-3.500 3.500-3.500-3.500z"/><path d="M992.500 489.500l3.500 3.500-3.500 3.500-3.500-3.500z"/><path d="M868.500 499.500l3.500 3.500-3.500 3.500-3.500-3.500z"/></g>
<text x="718" y="347" fill="#111" style="font-family:'Liberation Serif',serif;font-size:13.500px">1</text>
<text x="890" y="418" fill="#111" style="font-family:'Liberation Serif',serif;font-size:13.500px">2</text>
</svg>
</body></html>
